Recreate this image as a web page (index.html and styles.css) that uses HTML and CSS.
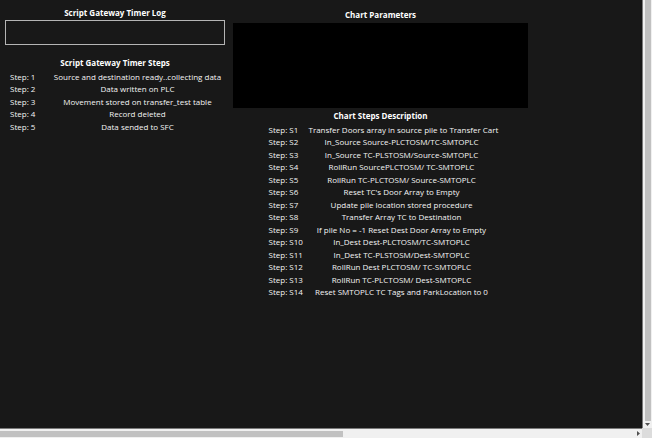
FILE: index.html
```html
<!DOCTYPE html>
<html>
<head>
<meta charset="utf-8">
<link rel="stylesheet" href="styles.css">
</head>
<body>
<div class="window">
  <div class="main-row">
    <div class="viewport">
      <div class="page">
        <section class="col col-left">
          <h2 class="title t-log">Script Gateway Timer Log</h2>
          <div class="log-box"></div>
          <h2 class="title t-steps">Script Gateway Timer Steps</h2>
          <div class="steps">
            <div class="row"><span class="lbl">Step: 1</span><span class="desc">Source and destination ready..collecting data</span></div>
            <div class="row"><span class="lbl">Step: 2</span><span class="desc">Data written on PLC</span></div>
            <div class="row"><span class="lbl">Step: 3</span><span class="desc">Movement stored on transfer_test table</span></div>
            <div class="row"><span class="lbl">Step: 4</span><span class="desc">Record deleted</span></div>
            <div class="row"><span class="lbl">Step: 5</span><span class="desc">Data sended to SFC</span></div>
          </div>
        </section>
        <section class="col col-right">
          <h2 class="title t-params">Chart Parameters</h2>
          <div class="chart-box"></div>
          <h2 class="title t-desc">Chart Steps Description</h2>
          <div class="steps steps-chart">
            <div class="row"><span class="lbl">Step: S1</span><span class="desc">Transfer Doors array in source pile to Transfer Cart</span></div>
            <div class="row"><span class="lbl">Step: S2</span><span class="desc">In_Source Source-PLCTOSM/TC-SMTOPLC</span></div>
            <div class="row"><span class="lbl">Step: S3</span><span class="desc">In_Source TC-PLSTOSM/Source-SMTOPLC</span></div>
            <div class="row"><span class="lbl">Step: S4</span><span class="desc">RollRun SourcePLCTOSM/ TC-SMTOPLC</span></div>
            <div class="row"><span class="lbl">Step: S5</span><span class="desc">RollRun TC-PLCTOSM/ Source-SMTOPLC</span></div>
            <div class="row"><span class="lbl">Step: S6</span><span class="desc">Reset TC's Door Array to Empty</span></div>
            <div class="row"><span class="lbl">Step: S7</span><span class="desc">Update pile location stored procedure</span></div>
            <div class="row"><span class="lbl">Step: S8</span><span class="desc">Transfer Array TC to Destination</span></div>
            <div class="row"><span class="lbl">Step: S9</span><span class="desc">If pile No = -1 Reset Dest Door Array to Empty</span></div>
            <div class="row"><span class="lbl">Step: S10</span><span class="desc">In_Dest Dest-PLCTOSM/TC-SMTOPLC</span></div>
            <div class="row"><span class="lbl">Step: S11</span><span class="desc">In_Dest TC-PLSTOSM/Dest-SMTOPLC</span></div>
            <div class="row"><span class="lbl">Step: S12</span><span class="desc">RollRun Dest PLCTOSM/ TC-SMTOPLC</span></div>
            <div class="row"><span class="lbl">Step: S13</span><span class="desc">RollRun TC-PLCTOSM/ Dest-SMTOPLC</span></div>
            <div class="row"><span class="lbl">Step: S14</span><span class="desc">Reset SMTOPLC TC Tags and ParkLocation to 0</span></div>
          </div>
        </section>
      </div>
    </div>
    <div class="vbar">
      <div class="vthumb"></div>
      <svg class="arrow-down" width="5" height="3" viewBox="0 0 5 3"><path d="M0 0H5L2.5 3Z" fill="#505050"/></svg>
    </div>
  </div>
  <div class="bottom-row">
    <div class="hbar">
      <div class="hthumb"></div>
      <svg class="arrow-right" width="3" height="5" viewBox="0 0 3 5"><path d="M0 0V5L3 2.5Z" fill="#505050"/></svg>
    </div>
    <div class="corner"></div>
  </div>
</div>
</body>
</html>
```
FILE: styles.css
```css
html, body {
  margin: 0;
  padding: 0;
  overflow: hidden;
  background: #f0f0f0;
}
.window {
  width: 652px;
  height: 438px;
  display: flex;
  flex-direction: column;
}
.main-row {
  height: 428px;
  display: flex;
}
.viewport {
  flex: 1;
  overflow: hidden;
  background: #181818;
  font-family: "Open Sans", "Noto Sans", sans-serif;
  font-size: 8px;
  color: #f4f4f4;
}
.vbar {
  width: 10px;
  box-sizing: border-box;
  border-left: 1px solid #7a7a7a;
  background: #f0f0f0;
  display: flex;
  flex-direction: column;
  align-items: center;
  padding: 0 1px 0 1px;
}
.vthumb {
  width: 6px;
  height: 421px;
  background: #c1c1c1;
}
.arrow-down {
  margin-top: 2px;
  display: block;
}
.bottom-row {
  height: 10px;
  display: flex;
}
.hbar {
  flex: 1;
  box-sizing: border-box;
  border-top: 1px solid #7a7a7a;
  background: #f0f0f0;
  display: flex;
  align-items: center;
  padding: 1px 2px 1px 0;
}
.hthumb {
  width: 343px;
  height: 6px;
  background: #c1c1c1;
}
.arrow-right {
  margin-left: auto;
  display: block;
}
.corner {
  width: 10px;
  background: #dcdcdc;
}
.page {
  width: 1205px;
  display: flex;
  align-items: flex-start;
  padding-top: 7px;
  box-sizing: border-box;
}
.col {
  display: flex;
  flex-direction: column;
}
.col-left {
  width: 220px;
  margin-left: 5px;
}
.col-right {
  width: 295px;
  margin-left: 8px;
}
.title {
  margin: 0;
  font-size: 8px;
  font-weight: 700;
  line-height: 12px;
  text-align: center;
  color: #ffffff;
}
.log-box {
  margin-top: 1px;
  height: 25px;
  box-sizing: border-box;
  border: 1px solid #b4b4b4;
}
.t-steps { margin-top: 12px; }
.t-params { margin-top: 2px; }
.chart-box {
  margin-top: 2px;
  height: 85px;
  background: #000000;
}
.t-desc { margin-top: 2px; }
.steps {
  display: flex;
  flex-direction: column;
  margin-top: 1.5px;
  padding-left: 5px;
}
.steps-chart {
  width: 226px;
  align-self: center;
  padding-left: 0;
  margin-left: 2px;
}
.row {
  display: flex;
  line-height: 12.5px;
  white-space: nowrap;
  font-weight: 500;
}
.lbl {
  width: 40px;
  flex: none;
}
.desc {
  flex: 1;
  text-align: center;
}
```
